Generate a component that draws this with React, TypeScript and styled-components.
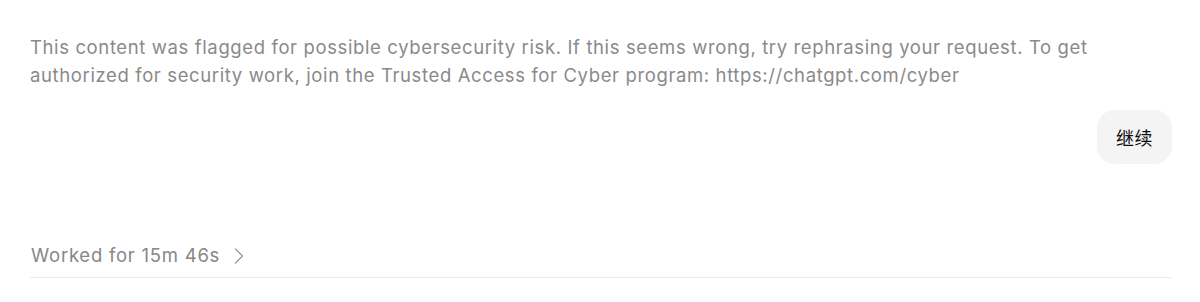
import React from "react";
import styled, { createGlobalStyle } from "styled-components";

const Global = createGlobalStyle`
  html, body { margin: 0; padding: 0; background: #ffffff; }
  body { font-family: Inter, "Noto Sans CJK SC", sans-serif; -webkit-font-smoothing: antialiased; }
`;

const Page = styled.div`
  width: 1200px;
  height: 302px;
  box-sizing: border-box;
  padding: 33px 28px 0 30px;
  display: flex;
  flex-direction: column;
`;

const Notice = styled.p`
  margin: 0;
  font-size: 18.5px;
  line-height: 28px;
  color: #8a8a8a;
  letter-spacing: 0.62px;
`;

const UserRow = styled.div`
  display: flex;
  justify-content: flex-end;
  margin-top: 21px;
`;

const Bubble = styled.div`
  background: #f4f4f4;
  border-radius: 18px;
  padding: 0 19px 0 19px;
  height: 54px;
  display: flex;
  align-items: center;
  font-family: "Noto Sans CJK SC", sans-serif;
  font-size: 18px;
  letter-spacing: 0.5px;
  color: #0d0d0d;
`;

const Summary = styled.div`
  margin-top: 77px;
  display: flex;
  align-items: center;
  gap: 14px;
  line-height: 28px;
  padding-bottom: 8px;
  border-bottom: 1px solid #ebebeb;
  font-size: 18.5px;
  letter-spacing: 0.75px;
  color: #878787;
  padding-left: 1px;
`;

const Chevron = styled.svg`
  width: 10px;
  height: 16px;
  color: #9a9a9a;
  margin-top: 1px;
`;

export default function App() {
  return (
    <>
      <Global />
      <Page>
        <Notice>
          This content was flagged for possible cybersecurity risk. If this seems wrong, try rephrasing your request. To get
          authorized for security work, join the Trusted Access for Cyber program: https://chatgpt.com/cyber
        </Notice>
        <UserRow>
          <Bubble>继续</Bubble>
        </UserRow>
        <Summary>
          <span>Worked for 15m 46s</span>
          <Chevron viewBox="0 0 10 16" fill="none">
            <path d="M1.5 1 L8.5 8 L1.5 15" stroke="currentColor" strokeWidth="1.3" strokeLinecap="round" strokeLinejoin="round" />
          </Chevron>
        </Summary>
      </Page>
    </>
  );
}
